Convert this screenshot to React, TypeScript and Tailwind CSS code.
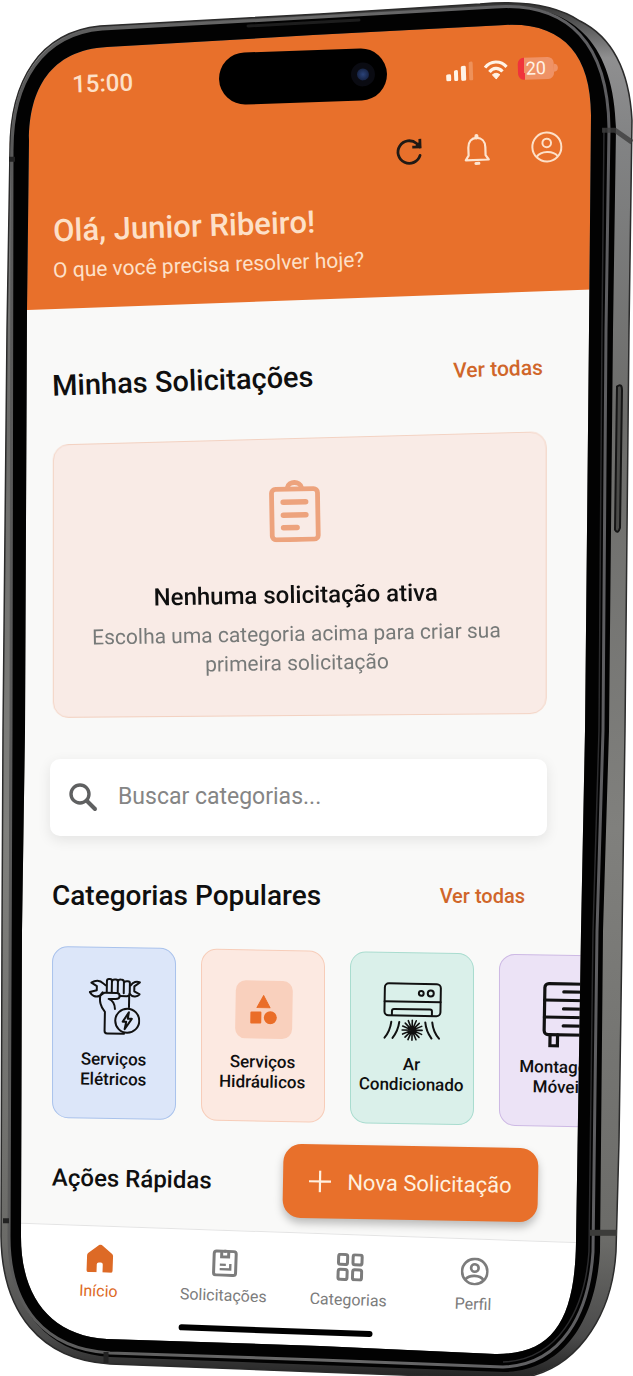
import type { ReactNode } from 'react';

const BODY =
  'M10 150 C10 80 40 32 100 26 L320 14 L480 4 Q545 -2 580 21 Q628 45 632 120 L629 330 L625 730 L619 1140 L616 1250 C612 1315 575 1374 510 1377 L320 1370 L110 1362 C40 1358 2 1310 1 1235 L2 930 L3 730 L7 330 Z';
const FACE =
  'M13 150 C13 82 42 34 102 29 L320 17 L490 7 C570 0 614 40 616 128 L613 330 L609 730 L603 930 L600 1250 C596 1316 566 1368 505 1370 L320 1363 L110 1355 C45 1351 9 1305 8 1235 L10 730 Z';
const SCREEN =
  'M29 140 C29 90 50 50 107 47 L313 35 L505 25 C562 22 591 54 591 115 L589 330 L585 730 L581 930 L576 1240 C575 1318 553 1353 495 1352 L320 1344 L107 1337 C50 1334 21 1294 21 1235 L22 930 L25 730 L27 310 Z';

const PhoneFrame = () => (
  <svg
    className="pointer-events-none absolute inset-0 z-20 h-full w-full"
    viewBox="0 0 633 1376"
    preserveAspectRatio="none"
    aria-hidden="true"
  >
    <defs>
      <linearGradient id="metal" x1="0" y1="0" x2="0" y2="1">
        <stop offset="0" stopColor="#333" />
        <stop offset="0.04" stopColor="#8f8f90" />
        <stop offset="0.1" stopColor="#828384" />
        <stop offset="0.3" stopColor="#6c6c6a" />
        <stop offset="0.6" stopColor="#80807d" />
        <stop offset="0.9" stopColor="#6b6b68" />
        <stop offset="0.97" stopColor="#4a4a4a" />
        <stop offset="1" stopColor="#222" />
      </linearGradient>
      <linearGradient id="rim" x1="0" y1="0" x2="1" y2="0">
        <stop offset="0" stopColor="#5a5a5a" />
        <stop offset="0.5" stopColor="#6a6a6a" />
        <stop offset="1" stopColor="#5d5d60" />
      </linearGradient>
    </defs>
    <path d={`M-2 -2 H635 V1378 H-2 Z ${BODY}`} fillRule="evenodd" fill="#fff" />
    <path d={`${BODY} ${SCREEN}`} fillRule="evenodd" fill="url(#metal)" />
    <path d={`${FACE} ${SCREEN}`} fillRule="evenodd" fill="#020202" />
    <path d={BODY} fill="none" stroke="#2b2b2b" strokeWidth="1.5" />
    <path
      d="M12 150 C12 82 42 34 102 29 L320 17 L495 7 C570 2 608 45 609 128 L606 330 L603 730 L597 930 L593 1250 C589 1312 562 1363 503 1365 L320 1358 L110 1351 C45 1347 9 1305 9 1235 L11 730 Z"
      fill="none"
      stroke="url(#rim)"
      strokeWidth="3"
    />
    <path
      d="M604 128 L602 330 L599 730 L593 930 L589 1250 C585 1308 558 1358 503 1360"
      fill="none"
      stroke="#2c2c2e"
      strokeWidth="1.5"
    />
    <path d="M602 130 H615 L632 142" fill="none" stroke="#3d3d3d" strokeWidth="5" opacity="0.8" />
    <path d="M590 1231 H617" stroke="#3c3c3a" strokeWidth="6" />
    <path d="M9 159 H15 M3 1219 H9 M106 1350 V1361" stroke="#222" strokeWidth="5" />
    <path d="M617 386 Q622 382 622 390 L620 527 Q618 534 615 529 Z" fill="#4b4b49" stroke="#151515" strokeWidth="2" />
    <path d="M248 26 L359 20" stroke="#1d1d1d" strokeWidth="3" strokeLinecap="round" />
  </svg>
);

const StatusIcons = () => (
  <div className="ml-auto flex items-center gap-[10px]">
    <svg className="h-5 w-7" viewBox="0 0 28 20" fill="#fff3e6" aria-label="Sinal">
      <rect x="0" y="13" width="5" height="7" rx="1.5" />
      <rect x="8" y="9" width="4" height="11" rx="1.5" />
      <rect x="15" y="5" width="5" height="15" rx="1.5" />
      <rect x="23" y="1" width="4" height="19" rx="1.5" opacity="0.25" />
    </svg>
    <svg className="h-5 w-6" viewBox="0 0 24 20" aria-label="Wi-Fi">
      <g fill="none" stroke="#fff3e6" strokeWidth="3.2">
        <path d="M1.200 7.500 C7 0.500 17 0.500 22.800 7.500" />
        <path d="M5.500 12 C9 7.500 15 7.500 18.500 12" />
      </g>
      <path d="M8.500 15 Q12 12 15.500 15 L12 19 Z" fill="#fff3e6" stroke="#fff3e6" strokeLinejoin="round" />
    </svg>
    <div className="flex items-center">
      <span className="flex h-[22px] w-9 items-center justify-center rounded-md bg-[linear-gradient(90deg,#f0333b_18%,#ef9266_18%)] text-lg text-[#fff3e6]">
        20
      </span>
      <span className="h-2 w-1 rounded-r bg-[#ef9266]" />
    </div>
  </div>
);

const RefreshIcon = () => (
  <svg className="size-7" viewBox="0 0 28 28" fill="none" stroke="#211a15" strokeWidth="2.8">
    <path d="M25 18 A11.300 11.300 0 1 1 22 6 L25 9.500" strokeLinecap="round" />
    <path d="M25.300 1.500 V9.500 H17.500" />
    <path d="M25 4 V10 H19 Z" fill="#211a15" stroke="none" />
  </svg>
);

const BellIcon = () => (
  <svg className="h-8 w-7" viewBox="0 0 28 32" fill="none" stroke="#fde4cf" strokeWidth="2.2" strokeLinecap="round" strokeLinejoin="round">
    <path d="M2.500 26.500 H25.500 L22.500 22 V14 C22.500 8 19 4.500 14 4.500 C9 4.500 5.500 8 5.500 14 V22 Z" />
    <path d="M14 2.500 V4" strokeWidth="4" />
    <path d="M12.500 30 H15.500" strokeWidth="3" />
  </svg>
);

const PersonIcon = ({ className }: { className: string }) => (
  <svg className={className} viewBox="0 0 32 32" fill="none" stroke="currentColor">
    <circle cx="16" cy="16" r="14.500" />
    <circle cx="16" cy="12" r="4.300" />
    <path d="M5.500 25.500 C10 19.500 22 19.500 26.500 25.500" />
  </svg>
);

const ClipboardIcon = () => (
  <svg className="h-[62px] w-13" viewBox="0 0 52 62" fill="none" stroke="#eda37d" strokeWidth="4.800" strokeLinecap="round" strokeLinejoin="round">
    <rect x="3" y="9" width="46" height="50.500" rx="4" />
    <path d="M19 7.500 C20 0.800 32 0.800 33 7.500" />
    <path d="M14.500 22 H37 M14.500 35 H37 M14.500 47.500 H28" strokeWidth="5.500" />
  </svg>
);

const ElectricIcon = () => (
  <svg className="h-15 w-13" viewBox="0 0 52 58" fill="none" stroke="#111" strokeWidth="2" strokeLinecap="round" strokeLinejoin="round">
    <path d="M17 7.500 C14.500 6.500 13.500 3 8.500 3 C6 3 4 4 2.500 5 L8 8.500 V12.500 L1 14.500 C3 18 7 20 11 18 C13 17 13.500 16 15 15.500" />
    <path d="M42 7 C44 3.500 48 2.500 51 4 L45.500 8 V13 L51 16 C48 19.500 43.500 18.500 41 15.500" />
    <path d="M18 14 V3 Q18 1 20 1 H21 Q23 1 23 3 V14 M23 4 Q23 1.500 26 1.500 H27 Q29 1.500 29 4 V14 M29 4 Q29 1.500 32 1.500 H33 Q35 1.500 35 4 V15 M35 5 Q35 3 38 3 H39 Q41 3 41 5 V15 Q41 18 38 18 H31" />
    <path d="M16 15 H28 Q31 15 31 18 Q31 21 27 21 H20 Q26 23 26.500 31 M14 14.500 Q10 18 12 26 Q13 30 16.500 34 V53 Q16.500 55.500 19 55.500 H36 M40.500 18 V29" />
    <circle cx="39" cy="42.500" r="12" />
    <path d="M40.500 34 L34.500 43.500 H38 L36.500 51 L43.500 40.500 H39.500 Z" />
  </svg>
);

const ShapesIcon = () => (
  <span className="flex h-[58px] w-[57px] items-center justify-center rounded-[10px] bg-[#f9d0bd]">
    <svg className="h-[30px] w-7" viewBox="0 0 28 30" fill="#ea6d28">
      <path d="M14 1 L20.500 13 H7.500 Z" stroke="#ea6d28" strokeLinejoin="round" />
      <rect x="1" y="17" width="11" height="12" rx="1" />
      <circle cx="21" cy="23" r="6.500" />
    </svg>
  </span>
);

const AirIcon = () => (
  <svg className="h-15 w-15" viewBox="0 0 60 60" fill="none" stroke="#111" strokeWidth="2" strokeLinecap="round">
    <rect x="2" y="1.500" width="56" height="32" rx="4" />
    <path d="M2 19.500 H58" />
    <path d="M9.500 33 V29 Q9.500 27 11.500 27 H47.500 Q49.500 27 49.500 29 V33" />
    <circle cx="38.500" cy="11" r="2.400" />
    <circle cx="48" cy="11" r="3" />
    <path d="M9 40 Q8 49 2.500 56 M17 40 Q16 49 10.500 56 M43 40 Q44 49 49.500 56 M50 40 Q51 49 57 56" />
    <path d="M30 38 V58 M20 48 H40 M23 41 L37 55 M37 41 L23 55 M26 38.500 L34 57.500 M34 38.500 L26 57.500 M20.500 44 L39.500 52 M20.500 52 L39.500 44" strokeWidth="1.600" />
  </svg>
);

const DrawerIcon = () => (
  <svg className="h-[66px] w-12" viewBox="0 0 48 66" fill="none" stroke="#111" strokeWidth="3.200" strokeLinecap="round">
    <rect x="7" y="2" width="51" height="51" rx="4" />
    <path d="M7 18.500 H48 M7 35.500 H48 M26 10 H48 M26 27 H48 M26 44 H48" />
    <path d="M13 53 V64 H20.500 V53" />
  </svg>
);

const categories = [
  { name: 'Serviços Elétricos', style: 'bg-[#dce6f9] border-[#a9c2ec]', icon: <ElectricIcon /> },
  { name: 'Serviços Hidráulicos', style: 'bg-[#fce9e1] border-[#f7cdb9]', icon: <ShapesIcon /> },
  { name: 'Ar Condicionado', style: 'bg-[#daf0ea] border-[#a9dccf]', icon: <AirIcon /> },
  { name: 'Montagem Móveis', style: 'bg-[#ece3f6] border-[#cdb9e4]', icon: <DrawerIcon /> },
];

const NavItem = ({ label, active, children }: { label: string; active?: boolean; children: ReactNode }) => (
  <a
    href="#"
    aria-current={active ? 'page' : undefined}
    className={`flex flex-col items-center gap-[9px] text-base leading-5 ${active ? 'text-[#dd6a26]' : 'text-[#7c7c7c]'}`}
  >
    {children}
    {label}
  </a>
);

const App = () => {
  return (
    <div className="relative flex flex-col overflow-hidden bg-[#f9f9f8] font-[Roboto,sans-serif] text-[#0f0f0f]">
      <PhoneFrame />

      <header className="h-[311px] bg-[#e8702b] pt-[50px] text-[#fde0c8] [clip-path:polygon(0_0,100%_0,100%_288px,0_311px)]">
        <div className="flex h-[52px] -rotate-2 items-center pr-[75px] pl-[72px]">
          <span className="w-[147px] text-2xl font-medium">15:00</span>
          <div className="flex h-[52px] w-[168px] items-center justify-end rounded-full bg-black pr-3">
            <span className="flex size-6 items-center justify-center rounded-full bg-[#0a0b12]">
              <span className="size-3 rounded-full bg-[radial-gradient(circle,#2b4378,#0e1730)]" />
            </span>
          </div>
          <StatusIcons />
        </div>

        <div className="mt-[37px] flex h-8 -rotate-2 items-center justify-end gap-10 pr-[70px]">
          <button aria-label="Atualizar"><RefreshIcon /></button>
          <button aria-label="Notificações"><BellIcon /></button>
          <button aria-label="Minha conta"><PersonIcon className="size-8 stroke-2" /></button>
        </div>

        <div className="mt-[38px] ml-[53px] flex flex-col items-start gap-2">
          <h1 className="-rotate-2 text-[31px] leading-9 font-medium">Olá, Junior Ribeiro!</h1>
          <p className="-rotate-2 text-[21px] leading-6">O que você precisa resolver hoje?</p>
        </div>
      </header>

      <main className="pl-[52px]">
        <section className="pr-[86px]">
          <div className="mt-12 flex -rotate-2 items-center justify-between pr-1">
            <h2 className="text-[29px] leading-9 font-medium">Minhas Solicitações</h2>
            <a href="#" className="text-[21px] font-medium text-[#d0662a]">Ver todas</a>
          </div>

          <div className="relative mt-[43px] mr-1 -ml-1 flex flex-col items-center pt-[42px] pb-[38px] text-center">
            <span className="absolute inset-0 rounded-2xl border border-[#f3d2c2] bg-[#f9ebe6] [transform:perspective(1000px)_rotateY(-4deg)_skewY(-1deg)]" />
            <div className="relative flex -rotate-1 flex-col items-center">
              <ClipboardIcon />
              <h3 className="mt-[39px] text-2xl leading-7 font-medium">Nenhuma solicitação ativa</h3>
              <p className="mt-[11px] px-8 text-[21px] leading-[29px] text-[#777a79]">
                Escolha uma categoria acima para criar sua primeira solicitação
              </p>
            </div>
          </div>

          <label className="mt-[43px] -ml-[2px] flex h-[77px] items-center gap-5 rounded-[10px] bg-white px-[18px] shadow-[0_4px_14px_rgba(0,0,0,0.09)]">
            <svg className="size-[30px] shrink-0" viewBox="0 0 30 30" fill="none" stroke="#5f6061" strokeWidth="3.400">
              <circle cx="12" cy="11" r="9" />
              <path d="M18.500 17.500 L27 26" strokeWidth="4" strokeLinecap="round" />
            </svg>
            <input
              type="text"
              aria-label="Buscar categorias"
              placeholder="Buscar categorias..."
              className="w-full bg-transparent text-[23px] outline-none placeholder:text-[#858585]"
            />
          </label>
        </section>

        <section>
          <div className="mt-[42px] flex items-center justify-between pr-[108px]">
            <h2 className="text-[28px] leading-9 font-medium">Categorias Populares</h2>
            <a href="#" className="text-xl font-medium text-[#d0662a]">Ver todas</a>
          </div>

          <div className="mt-[37px] flex rotate-1 gap-[25px]">
            {categories.map((category) => (
              <button
                key={category.name}
                className="relative flex h-[172px] w-[124px] shrink-0 flex-col items-center pt-[26px] text-[17px] leading-5 font-medium"
              >
                <span className={`absolute inset-0 skew-x-1 rounded-2xl border ${category.style}`} />
                <span className="relative flex h-[68px] items-center">{category.icon}</span>
                <span className="relative mt-2 w-min">{category.name}</span>
              </button>
            ))}
          </div>
        </section>

        <section className="mt-[23px] flex items-center justify-between pr-[95px]">
          <h2 className="mb-2 rotate-1 text-2xl font-medium">Ações Rápidas</h2>
          <button className="flex h-[74px] w-[255px] rotate-1 items-center justify-center gap-4 rounded-[18px] bg-[#e8702b] text-[22px] text-[#fff0df] shadow-[0_5px_9px_rgba(0,0,0,0.25)]">
            <svg className="size-[22px]" viewBox="0 0 22 22" stroke="currentColor" strokeWidth="2.200">
              <path d="M11 0 V22 M0 11 H22" />
            </svg>
            Nova Solicitação
          </button>
        </section>
      </main>

      <nav className="mt-[13px] h-[145px] origin-top rotate-2 border-t border-[#e4e4e4] bg-white pt-[18px]">
        <div className="grid grid-cols-4 pr-[95px] pl-[38px]">
          <NavItem label="Início" active>
            <svg className="size-7" viewBox="0 0 28 28" fill="currentColor">
              <path d="M14 0 Q15 0 16 1 L26 9 Q27 10 27 11.500 V26 Q27 28 25 28 H17 V20 Q17 18 15 18 H13 Q11 18 11 20 V28 H3 Q1 28 1 26 V11.500 Q1 10 2 9 L12 1 Q13 0 14 0 Z" />
            </svg>
          </NavItem>
          <NavItem label="Solicitações">
            <svg className="size-7" viewBox="0 0 28 28" fill="none" stroke="currentColor" strokeWidth="3">
              <rect x="3" y="2.500" width="22" height="24" rx="2.500" />
              <path d="M10.500 2 V8 H17.500 V2" />
              <path d="M14 1 V4" strokeWidth="2" />
              <path d="M9 20.500 H19.500 V15 M9 16 H15" strokeWidth="2.400" />
            </svg>
          </NavItem>
          <NavItem label="Categorias">
            <svg className="size-7" viewBox="0 0 28 28" fill="none" stroke="currentColor" strokeWidth="3">
              <rect x="2.500" y="1.500" width="9" height="10" rx="2" />
              <rect x="17" y="1.500" width="9" height="10" rx="2" />
              <rect x="2.500" y="16.500" width="9" height="10" rx="2" />
              <rect x="17" y="16.500" width="9" height="10" rx="2" />
            </svg>
          </NavItem>
          <NavItem label="Perfil">
            <PersonIcon className="size-7 stroke-3" />
          </NavItem>
        </div>
        <div className="mt-5 ml-[182px] h-[6px] w-[194px] rounded-full bg-black" />
      </nav>
    </div>
  );
};

export default App;
